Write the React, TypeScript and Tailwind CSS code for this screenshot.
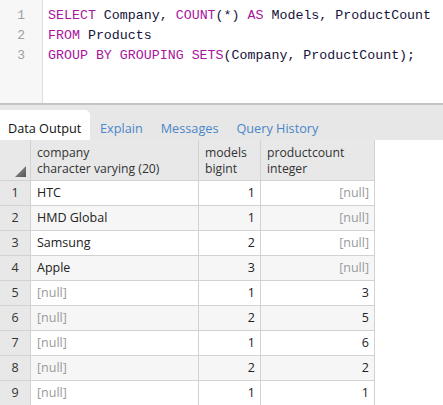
import React from 'react';

const code = [
  [
    { t: 'SELECT', k: true },
    { t: ' Company, ' },
    { t: 'COUNT', k: true },
    { t: '(*) ' },
    { t: 'AS', k: true },
    { t: ' Models, ProductCount' },
  ],
  [{ t: 'FROM', k: true }, { t: ' Products' }],
  [
    { t: 'GROUP BY GROUPING SETS', k: true },
    { t: '(Company, ProductCount);' },
  ],
];

const rows: [string | null, number, number | null][] = [
  ['HTC', 1, null],
  ['HMD Global', 1, null],
  ['Samsung', 2, null],
  ['Apple', 3, null],
  [null, 1, 3],
  [null, 2, 5],
  [null, 1, 6],
  [null, 2, 2],
  [null, 1, 1],
];

const Null = () => <span className="text-[#9a9a9a]">[null]</span>;

const App: React.FC = () => {
  return (
    <div className="w-[443px] h-[405px] overflow-hidden bg-white font-['Open_Sans',sans-serif] text-[#222]">
      {/* Query editor */}
      <div className="flex h-[103px]">
        <div className="w-[43px] bg-[#f7f7f7] border-r border-[#dedede] pt-[6px] pr-[17px] text-right font-['Liberation_Mono',monospace] text-[13px] leading-[20px] text-[#a0a0a0]">
          <div>1</div>
          <div>2</div>
          <div>3</div>
        </div>
        <div className="pl-[5px] pt-[6px] font-['Liberation_Mono',monospace] text-[13.3px] leading-[20px] text-[#14143a] whitespace-pre">
          {code.map((line, i) => (
            <div key={i}>
              {line.map((s, j) => (
                <span key={j} className={s.k ? 'text-[#a8159c]' : ''}>
                  {s.t}
                </span>
              ))}
            </div>
          ))}
        </div>
      </div>

      {/* Tabs */}
      <div className="border-t-2 border-[#c4c4c4] bg-[#e7e7e7] h-[37px] pt-[5px] flex items-end text-[12.7px] leading-[18px]">
        <div className="bg-white h-[30px] w-[90px] rounded-tr-[5px] flex items-end pb-[3px] pl-[8px] text-[#111]">
          Data Output
        </div>
        <div className="flex items-end h-[30px] pb-[3px] pl-[10px] gap-[18px] text-[#4a86c8]">
          <span>Explain</span>
          <span>Messages</span>
          <span>Query History</span>
        </div>
      </div>

      {/* Result grid */}
      <div className="flex text-[12.2px]">
        <div className="w-[375px]">
          <div className="flex h-[41px] bg-[#e8e8e8] border-b border-[#d2d2d2] leading-[16px] text-[#333]">
            <div className="w-[31px] border-r border-[#d2d2d2] flex items-end justify-end pr-[4px] pb-[3px]">
              <svg width="11" height="11" viewBox="0 0 11 11">
                <defs>
                  <linearGradient id="tri" x1="0" y1="0" x2="1" y2="1">
                    <stop offset="0" stopColor="#9a9a9a" />
                    <stop offset="1" stopColor="#555" />
                  </linearGradient>
                </defs>
                <polygon points="11,0 11,11 0,11" fill="url(#tri)" />
              </svg>
            </div>
            <div className="w-[168px] border-r border-[#d2d2d2] pl-[6px] pt-[5px]">
              <div>company</div>
              <div>character varying (20)</div>
            </div>
            <div className="w-[62px] border-r border-[#d2d2d2] pl-[6px] pt-[5px]">
              <div>models</div>
              <div>bigint</div>
            </div>
            <div className="w-[114px] border-r border-[#d2d2d2] pl-[6px] pt-[5px]">
              <div>productcount</div>
              <div>integer</div>
            </div>
          </div>
          {rows.map(([company, models, count], i) => (
            <div
              key={i}
              className={`flex h-[25px] border-b border-[#d2d2d2] items-stretch leading-[24px] text-[12.5px] ${
                i % 2 === 1 ? 'bg-[#f6f6f6]' : 'bg-white'
              }`}
            >
              <div className="w-[31px] bg-[#e8e8e8] border-r border-[#d2d2d2] text-center text-[#333]">{i + 1}</div>
              <div className="w-[168px] border-r border-[#d2d2d2] pl-[6px] text-[#222]">
                {company ?? <Null />}
              </div>
              <div className="w-[62px] border-r border-[#d2d2d2] text-right pr-[5px]">{models}</div>
              <div className="w-[114px] border-r border-[#d2d2d2] text-right pr-[5px]">
                {count ?? <Null />}
              </div>
            </div>
          ))}
        </div>
      </div>
    </div>
  );
};

export default App;
